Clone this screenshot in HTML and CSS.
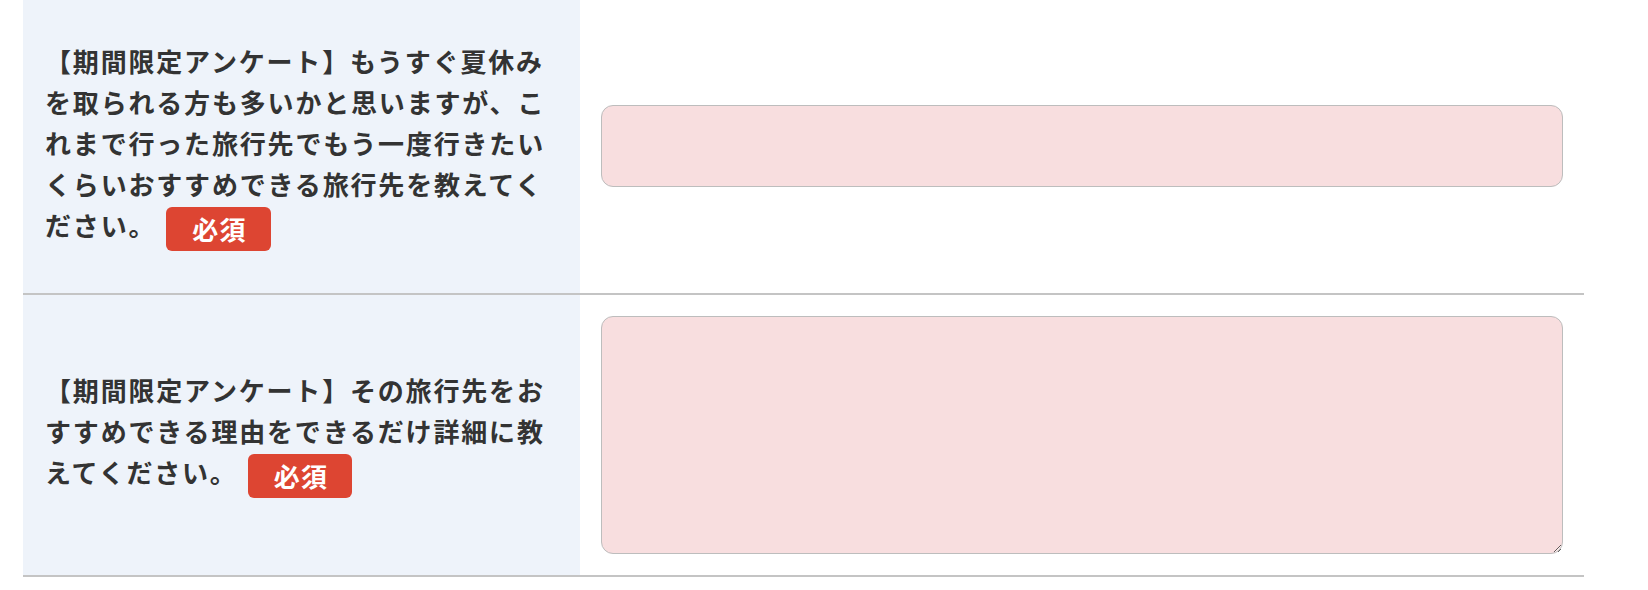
FILE: index.html
```html
<!DOCTYPE html>
<html lang="ja">
  <head>
    <meta charset="UTF-8" />
    <title>期間限定アンケート</title>
    <link rel="stylesheet" href="styles.css">
  </head>
  <body>
    <div class="form-table">
      <div class="row">
        <div class="label">
          <p>【期間限定アンケート】もうすぐ夏休みを取られる方も多いかと思いますが、これまで行った旅行先でもう一度行きたいくらいおすすめできる旅行先を教えてください。<span class="required">必須</span></p>
        </div>
        <div class="field">
          <input type="text" class="answer" />
        </div>
      </div>

      <div class="row">
        <div class="label">
          <p>【期間限定アンケート】その旅行先をおすすめできる理由をできるだけ詳細に教えてください。<span class="required">必須</span></p>
        </div>
        <div class="field">
          <textarea class="answer answer-long"></textarea>
        </div>
      </div>
    </div>
  </body>
</html>
```

FILE: styles.css
```css
* {
  box-sizing: border-box;
}

body {
  margin: 0;
  background: #fff;
  font-family: "Noto Sans CJK JP", "Noto Sans", sans-serif;
  color: #333;
}

.form-table {
  margin-left: 23px;
  width: 1561px;
}

.row {
  display: grid;
  grid-template-columns: 557px 1fr;
  border-bottom: 2px solid #c4c4c4;
}

.label {
  display: flex;
  align-items: center;
  background: #eef3fa;
  padding: 40px 20px 46px 22px;
}

.label p {
  margin: 0;
  font-size: 26px;
  font-weight: bold;
  line-height: 41px;
  letter-spacing: 0.07em;
}

.required {
  display: inline-block;
  height: 44px;
  line-height: 44px;
  margin: -4px 0 -4px 10px;
  padding: 0 24px 0 26px;
  background: #dd4532;
  color: #fff;
  border-radius: 6px;
  font-size: 26px;
  letter-spacing: 0.05em;
  vertical-align: middle;
}

.field {
  display: flex;
  align-items: center;
  padding: 21px;
}

.answer {
  width: 100%;
  height: 82px;
  margin: 0;
  border: 1.5px solid #bdbdbd;
  border-radius: 12px;
  background: #f8dedf;
  font-size: 18px;
  padding: 10px 16px;
}

.answer-long {
  height: 238px;
  display: block;
}
```
